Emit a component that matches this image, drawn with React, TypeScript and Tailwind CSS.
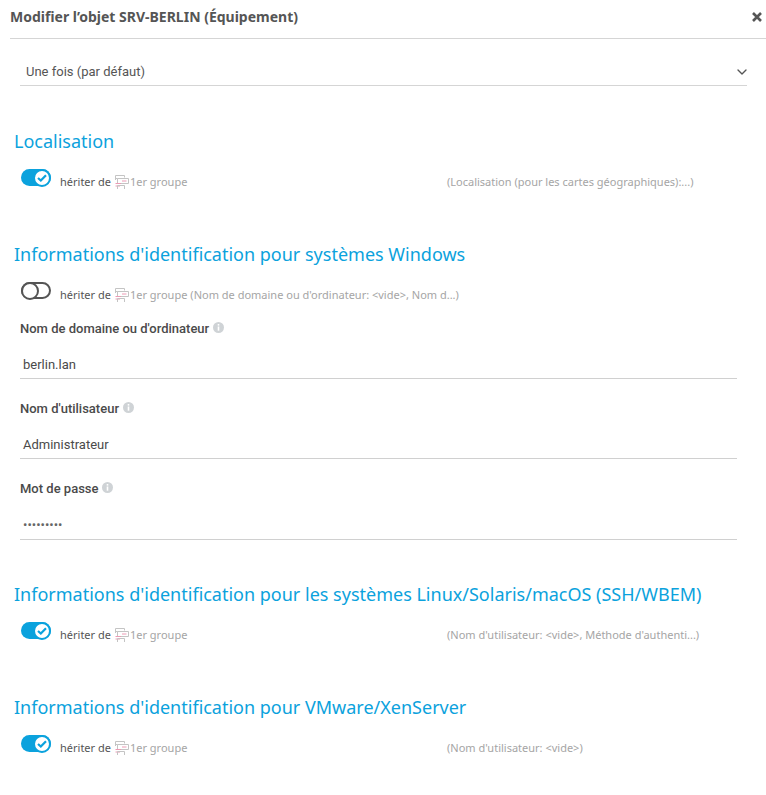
import React from 'react'
import { ChevronDown } from 'lucide-react'

const GroupIcon = () => (
  <svg width="16" height="16" viewBox="0 0 16 16" fill="none" className="shrink-0 mx-[3px]">
    <path d="M1.5 6V1.5H10.5V3.5M3.5 4.5H1.5" stroke="#c4c4c4" />
    <path d="M3.5 4.5H14.5V9.5H3.5Z" stroke="#c4c4c4" />
    <path d="M8 7H12.5" stroke="#ec9ab4" />
    <path d="M1.5 9.5H7M1.5 12H6" stroke="#ec9ab4" />
    <path d="M3.5 15V11.5H10.5V15" stroke="#c4c4c4" />
  </svg>
)

const InfoDot = () => (
  <svg width="11" height="11" viewBox="0 0 11 11" className="shrink-0 mb-[3px]">
    <circle cx="5.5" cy="5.5" r="5.5" fill="#cfd3d6" />
    <rect x="4.7" y="2" width="1.6" height="1.6" fill="#fff" />
    <rect x="4.7" y="4.5" width="1.6" height="4.2" fill="#fff" />
  </svg>
)

const Toggle = ({ on }: { on: boolean }) =>
  on ? (
    <div className="w-[30px] h-[17px] rounded-full bg-[#0ba2dd] flex items-center justify-end shrink-0">
      <div className="w-[18px] h-[18px] shrink-0 rounded-full border-2 border-[#0ba2dd] bg-white flex items-center justify-center">
        <svg width="10" height="8" viewBox="0 0 10 8" fill="none">
          <path d="M1 4L3.8 6.5L9 1.2" stroke="#0ba2dd" strokeWidth="2.2" />
        </svg>
      </div>
    </div>
  ) : (
    <div className="w-[30px] h-[17px] rounded-full border-2 border-[#555] shrink-0 bg-white flex items-center">
      <div className="w-[18px] h-[18px] shrink-0 -ml-[2px] rounded-full border-2 border-[#555] bg-white" />
    </div>
  )

const Inherit = ({ on, note, wide }: { on: boolean; note: string; wide?: boolean }) => (
  <div className="flex items-start h-[24px] pl-[21px] text-[11px] leading-4 font-['Noto_Sans',sans-serif]">
    <Toggle on={on} />
    <div className="flex items-center flex-1 pt-[5px]">
      <span className="ml-[9px] text-[#555]">hériter de</span>
      <GroupIcon />
      <span className="text-[#a5a5a5] -ml-[3px]">1er groupe</span>
      <span className={wide ? 'ml-[3px] text-[#a5a5a5]' : 'ml-auto w-[319px] text-[#a5a5a5]'}>{note}</span>
    </div>
  </div>
)

const Field = ({ label, value, secret }: { label: string; value: string; secret?: boolean }) => (
  <div className="ml-5 mr-[29px]">
    <div className="flex items-center gap-[4px] h-[18px] text-[13px] font-medium text-[#4a4a4a]">
      {label}
      <InfoDot />
    </div>
    <div className={secret ? 'h-[42px] pt-[18px] pl-[3px] text-[13px] leading-[18px] text-[#666] border-b border-[#d0d0d0]' : 'h-[41px] pt-[18px] pl-[3px] text-[13px] leading-[18px] text-[#4a4a4a] border-b border-[#d0d0d0]'}>{value}</div>
  </div>
)

const Title = ({ children }: { children: React.ReactNode }) => (
  <h2 className="pl-[14px] text-lg leading-6 text-[#0ba2dd] font-['Noto_Sans',sans-serif]">{children}</h2>
)

export default function App() {
  return (
    <div className="w-[766px] h-[795px] bg-white font-['Roboto',sans-serif]">
      <div className="ml-[10px] h-[39px] flex items-center justify-between border-b border-[#d5d5d5] pb-[4px] pr-[4px]">
        <span className="text-sm font-bold text-[#555] font-['Noto_Sans',sans-serif]">Modifier l’objet SRV-BERLIN (Équipement)</span>
        <svg width="10" height="10" viewBox="0 0 10 10" fill="none">
          <path d="M1 1L9 9M9 1L1 9" stroke="#555" strokeWidth="2.6" />
        </svg>
      </div>
      <div className="ml-5 mr-[19px] mt-[19px] h-[28px] flex items-center justify-between pl-[6px] pt-[1px] pb-[1px] border-b border-[#d5d5d5] text-[13px] text-[#555]">
        Une fois (par défaut)
        <ChevronDown size={16} className="text-[#555] -mr-[3px]" />
      </div>
      <div className="mt-[43px]"><Title>Localisation</Title></div>
      <div className="mt-[16px]"><Inherit on note="(Localisation (pour les cartes géographiques):...)" /></div>
      <div className="mt-[49px]"><Title>Informations d'identification pour systèmes Windows</Title></div>
      <div className="mt-[16px]"><Inherit on={false} wide note="(Nom de domaine ou d'ordinateur: <vide>, Nom d...)" /></div>
      <div className="mt-[14px] flex flex-col gap-[21px]">
        <Field label="Nom de domaine ou d'ordinateur" value="berlin.lan" />
        <Field label="Nom d'utilisateur" value="Administrateur" />
        <Field label="Mot de passe" value="•••••••••" secret />
      </div>
      <div className="mt-[42px]"><Title>Informations d'identification pour les systèmes Linux/Solaris/macOS (SSH/WBEM)</Title></div>
      <div className="mt-[16px]"><Inherit on note="(Nom d'utilisateur: <vide>, Méthode d'authenti...)" /></div>
      <div className="mt-[49px]"><Title>Informations d'identification pour VMware/XenServer</Title></div>
      <div className="mt-[16px]"><Inherit on note="(Nom d'utilisateur: <vide>)" /></div>
    </div>
  )
}
